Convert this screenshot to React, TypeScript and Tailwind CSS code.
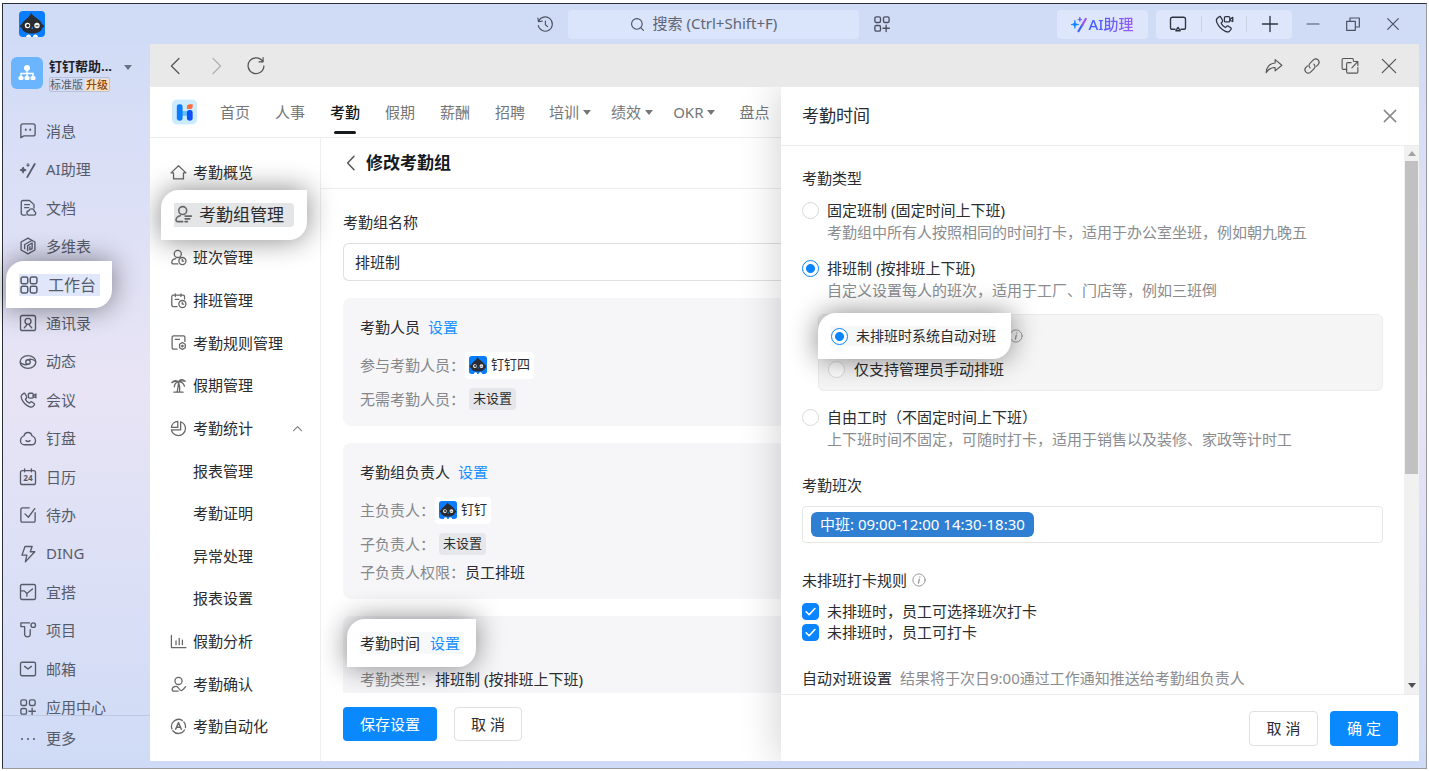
import { useState, type ReactNode } from "react";

const CALLOUT =
  "absolute z-10 flex items-center rounded-tl-[18px] rounded-br-[18px] bg-white shadow-[0_0_28px_rgba(0,0,0,0.48)]";

function Icon({
  size = 18,
  width = 1.8,
  className,
  children,
}: {
  size?: number;
  width?: number;
  className?: string;
  children: ReactNode;
}) {
  return (
    <svg
      width={size}
      height={size}
      viewBox="0 0 24 24"
      fill="none"
      stroke="currentColor"
      strokeWidth={width}
      strokeLinecap="round"
      strokeLinejoin="round"
      className={`shrink-0 ${className ?? ""}`}
      aria-hidden="true"
    >
      {children}
    </svg>
  );
}

const appsPlus = (
  <>
    <rect x="2.500" y="2.500" width="7.500" height="7.500" rx="2" />
    <rect x="14" y="2.500" width="7.500" height="7.500" rx="2" />
    <rect x="2.500" y="14" width="7.500" height="7.500" rx="2" />
    <path d="M17.500 13.500v8.500M13.300 17.700h8.500" />
  </>
);

const phoneVideo = (
  <>
    <path d="M6.200 3.200 3.600 5.400c-1 1-.9 3 0 5.200 2.200 5 5.500 8.300 10 10.200 2 .8 3.900.8 5-.2l1.800-2.100c.5-.7.4-1.400-.2-1.900l-3-2c-.7-.4-1.300-.3-1.900.2l-1.500 1.400c-2-.8-4.300-3-5.200-5.200L10 9.300c.5-.5.5-1.200.1-1.900l-2-3.700c-.5-.8-1.200-.9-1.900-.5z" />
    <rect x="12.500" y="3" width="6.500" height="6.500" rx="1.500" />
    <path d="m19 6.500 3.500-2.500v5l-3.500-1.500" />
  </>
);

const aiWand = (
  <>
    <path d="M11 21.500 21 4" strokeWidth="2.400" />
    <path d="M5.500 8.500c.3 2.500 1 3.200 3.500 3.500-2.500.3-3.200 1-3.500 3.500-.3-2.500-1-3.200-3.500-3.500 2.500-.3 3.200-1 3.500-3.500z" fill="currentColor" />
    <path d="M12 3.500c.2 1.500.6 1.900 2 2-1.400.2-1.800.6-2 2-.2-1.400-.6-1.800-2-2 1.400-.1 1.800-.5 2-2z" fill="currentColor" strokeWidth="1" />
  </>
);

const mainNav: { label: string; icon: ReactNode }[] = [
  {
    label: "消息",
    icon: (
      <>
        <path d="M2.500 21V5A2.500 2.500 0 0 1 5 2.500h14A2.500 2.500 0 0 1 21.500 5v11a2.500 2.500 0 0 1-2.500 2.500H6.500z" />
        <path d="M9 10v.5M15 10v.5" strokeWidth="2.500" />
      </>
    ),
  },
  { label: "AI助理", icon: aiWand },
  {
    label: "文档",
    icon: (
      <>
        <path d="M9 21.500H5.500A2.500 2.500 0 0 1 3 19V4.500A2.500 2.500 0 0 1 5.500 2H14l6 5.500V12" />
        <path d="M7.500 7.500H14M7.500 11.500H13" />
        <path d="M13.500 21.500a2.900 2.900 0 0 1-.2-5.800 3.700 3.700 0 0 1 7.200.9 2.500 2.500 0 0 1-.4 4.900z" />
      </>
    ),
  },
  {
    label: "多维表",
    icon: (
      <>
        <path d="m12 1.500 9.200 5.200v10.600L12 22.500l-9.200-5.200V6.700z" />
        <path d="M7.500 15.500V10l9-5M11.500 18v-6.500L17.500 8v7.500L14.500 17v-4" />
      </>
    ),
  },
  {
    label: "工作台",
    icon: (
      <>
        <rect x="2.500" y="2.500" width="8" height="8" rx="2" />
        <rect x="13.500" y="2.500" width="8" height="8" rx="2" />
        <rect x="2.500" y="13.500" width="8" height="8" rx="2" />
        <rect x="13.500" y="13.500" width="8" height="8" rx="2" />
      </>
    ),
  },
  {
    label: "通讯录",
    icon: (
      <>
        <rect x="2" y="2" width="20" height="20" rx="2.500" />
        <circle cx="12" cy="9.800" r="4" />
        <path d="M7 18.500c1-1.500 2.500-2 3.500-4.500M17 18.500c-1-1.500-2.500-2-3.500-4.500" />
      </>
    ),
  },
  {
    label: "动态",
    icon: (
      <>
        <ellipse cx="12" cy="12" rx="10.500" ry="8.500" />
        <circle cx="12" cy="12" r="3" />
        <path d="M2 13c3 3 8 3 10 2M22 11c-3-3-8-3-10-2" />
      </>
    ),
  },
  { label: "会议", icon: phoneVideo },
  {
    label: "钉盘",
    icon: (
      <>
        <path d="M6.800 9a5.300 5.300 0 0 1 10.400 0c3 1.300 4.800 3.600 4.800 6.600 0 3.200-2.300 5.400-5.200 5.400H7.200C4.300 21 2 18.800 2 15.600 2 12.600 3.800 10.300 6.800 9z" />
        <path d="M9.300 15.500c1.600 1.300 3.800 1.300 5.400 0" />
      </>
    ),
  },
  {
    label: "日历",
    icon: (
      <>
        <rect x="2" y="3.500" width="20" height="18.500" rx="2.500" />
        <path d="M7.500 1.300V5M16.500 1.300V5" />
        <text
          x="12"
          y="17"
          textAnchor="middle"
          fontSize="11"
          fontWeight="700"
          fill="currentColor"
          stroke="none"
        >
          24
        </text>
      </>
    ),
  },
  {
    label: "待办",
    icon: (
      <>
        <path d="M13.500 2.500H4.500a2 2 0 0 0-2 2v15a2 2 0 0 0 2 2h15a2 2 0 0 0 2-2V9" />
        <path d="m8 10.500 4.500 4.500L21 3.500" />
      </>
    ),
  },
  {
    label: "DING",
    icon: <path d="M8 2h9.500L15 9h6L8.500 22.500l2-9H4z" />,
  },
  {
    label: "宜搭",
    icon: (
      <>
        <rect x="2" y="2" width="20" height="20" rx="2" />
        <path d="M2.500 10.500h4.500l3.500 3.500L18 8M10.500 14v3.500" />
      </>
    ),
  },
  {
    label: "项目",
    icon: (
      <>
        <path d="M14 2.500H2.500v5h5V18a3.800 3.800 0 0 0 7.500 0v-6.500" />
        <circle cx="19" cy="5.500" r="3" />
      </>
    ),
  },
  {
    label: "邮箱",
    icon: (
      <>
        <rect x="2" y="3" width="20" height="18" rx="2" />
        <path d="m7.500 8.500 4.500 3.500 4.500-3.500" />
      </>
    ),
  },
  { label: "应用中心", icon: appsPlus },
];

const person = (
  <>
    <circle cx="11" cy="7" r="5" />
    <path d="M11 21H4.500a2 2 0 0 1-2-2c0-2.500 2.500-5 5.500-5.500" />
  </>
);

const sideMenu: { label: string; icon?: ReactNode; open?: boolean }[] = [
  {
    label: "考勤概览",
    icon: <path d="M12 2.500 1.500 12.500H5V21h14v-8.500h3.500z" />,
  },
  {
    label: "考勤组管理",
    icon: (
      <>
        {person}
        <path d="M14 14h8M14 17.500h6M14 21h3" />
      </>
    ),
  },
  {
    label: "班次管理",
    icon: (
      <>
        {person}
        <circle cx="17.500" cy="17" r="5" />
        <path d="M17.300 14.800V17h2" />
      </>
    ),
  },
  {
    label: "排班管理",
    icon: (
      <>
        <path d="M10 20.500H4.500a2 2 0 0 1-2-2V6.500a2 2 0 0 1 2-2h14a2 2 0 0 1 2 2V10M7.500 2.500v4M15.500 2.500v4M7.500 10.500h5" />
        <circle cx="17.500" cy="17" r="5" />
        <path d="M17.300 14.800V17h2" />
      </>
    ),
  },
  {
    label: "考勤规则管理",
    icon: (
      <>
        <path d="M10 21.500H5a2 2 0 0 1-2-2v-15a2 2 0 0 1 2-2h14a2 2 0 0 1 2 2v6M7.500 7.500h6" />
        <path d="m17.500 12 4 2.500v5l-4 2.500-4-2.500v-5z" />
        <circle cx="17.500" cy="17" r="1" />
      </>
    ),
  },
  {
    label: "假期管理",
    icon: (
      <>
        <path d="M5.500 21.500h13M13.500 21.500c.5-5 .3-10-1.500-14.500M10 21.500c1-4.500 2-9 2-14.500" />
        <path d="M12 7C9.500 4 5 4.500 2.500 8c3.500-2 7-2 9.500-1zM12 7c-3 .5-5.500 3-6 7M12 7c1.500-4 6-4.500 9.500-1-3.500-.8-7-.5-9.500 1zM12 7c4-.5 7 1.500 8.500 6" />
      </>
    ),
  },
  {
    label: "考勤统计",
    open: true,
    icon: (
      <>
        <path d="M15 2.500A10 10 0 1 1 2 14h13z" />
        <path d="M11 2A9.500 9.500 0 0 0 2 10.500h9z" />
      </>
    ),
  },
  { label: "报表管理" },
  { label: "考勤证明" },
  { label: "异常处理" },
  { label: "报表设置" },
  {
    label: "假勤分析",
    icon: <path d="M2 3.500v17h20.500M8.500 11v5.500M13 7.500v9M17.500 10v6.500" />,
  },
  {
    label: "考勤确认",
    icon: (
      <>
        <circle cx="12" cy="7" r="5" />
        <path d="M11.500 21.500H5a2 2 0 0 1-2-2c0-2.800 2.500-5 6-5 3 0 3.500 6 7 6 2 0 4-3 6-5.500" />
      </>
    ),
  },
  {
    label: "考勤自动化",
    icon: (
      <>
        <path d="M20.500 17A10 10 0 0 1 4 18M2.800 15.500A10 10 0 0 1 17.500 3.500M19.500 5.500a10 10 0 0 1 2.300 8" />
        <path d="m8 16 4-9.500 4 9.500M9.500 13h5" strokeWidth="2" />
      </>
    ),
  },
];

function Avatar({ size }: { size: number }) {
  return (
    <svg width={size} height={size} viewBox="0 0 26 26" className="shrink-0" aria-hidden="true">
      <rect width="26" height="26" rx="4" fill="#0a7dff" />
      <path d="M12 1.500C13 6 23.500 8 23.500 15.500c0 4.500-4.500 7-10.500 7s-10.500-2.500-10.500-7C2.500 9 11.500 7 12 1.500z" fill="#2b2c31" />
      <circle cx="2.500" cy="15" r="1.500" fill="#2b2c31" />
      <circle cx="23.500" cy="15" r="1.500" fill="#2b2c31" />
      <circle cx="8.500" cy="14.500" r="2.700" fill="#fff" />
      <circle cx="18" cy="14.500" r="2.700" fill="#fff" />
      <circle cx="8.800" cy="14.500" r="1.500" fill="#222" />
      <path d="M16.500 14.800h3" stroke="#222" strokeWidth="1" />
      <path d="m13.300 16 1.200 1.800h-2.400z" fill="#1ba0ff" />
      <path d="M7 26c0-3.500 5-3.500 5 0M14 26c0-3.500 5-3.500 5 0" fill="#fff" />
    </svg>
  );
}

function Caret({ className }: { className?: string }) {
  return (
    <svg width="8" height="5" viewBox="0 0 8 5" className={className} aria-hidden="true">
      <path d="M0 0h8L4 5z" fill="currentColor" />
    </svg>
  );
}

function InfoIcon() {
  return (
    <Icon size={14} width={1.5} className="text-[#8c8c8c]">
      <circle cx="12" cy="12" r="10.500" />
      <path d="m12.500 10.500-1.500 7M13.500 6.500v.5" strokeWidth="2" />
    </Icon>
  );
}

function TitleBar() {
  return (
    <header className="flex h-10 shrink-0 items-center text-[#4b5160]">
      <div className="flex flex-1 pl-4 pr-1.5">
        <Avatar size={26} />
      </div>
      <div className="flex items-center gap-[14px]">
        <button type="button" aria-label="历史记录">
          <Icon width={1.5}>
            <path d="M3.500 8.500A9.500 9.500 0 1 1 3 14M2.500 4l.8 5 5-.8M12.500 8v5l3 2.500" />
          </Icon>
        </button>
        <label className="flex h-[29px] w-[291px] items-center justify-center gap-2 rounded bg-[#dae4fa]">
          <Icon size={15}>
            <circle cx="11" cy="11" r="8.500" />
            <path d="m17.500 17.500 4 4" />
          </Icon>
          <input
            aria-label="搜索"
            placeholder="搜索 (Ctrl+Shift+F)"
            className="h-6 w-[144px] bg-transparent pb-0.5 text-[15px] outline-none placeholder:text-[#5e6575]"
          />
        </label>
        <button type="button" aria-label="应用">
          <Icon>{appsPlus}</Icon>
        </button>
      </div>
      <div className="flex flex-1 items-center justify-end pr-[25px]">
        <button
          type="button"
          className="mr-2 flex h-[29px] w-[91px] items-center justify-center rounded bg-[#dde6fb]"
        >
          <svg width="17" height="17" viewBox="0 0 24 24" fill="none" strokeLinecap="round" aria-hidden="true">
            <path d="M10.500 21.500 16 12.500" stroke="#3d62f8" strokeWidth="3" />
            <path d="M16 12.500 21 4" stroke="#9a55f2" strokeWidth="3" />
            <path d="M5.500 6.500c.4 4.200 1.300 5.100 5.500 5.500-4.200.4-5.100 1.300-5.500 5.500C5.100 13.300 4.200 12.400 0 12c4.200-.4 5.100-1.300 5.500-5.500z" fill="#0a84ff" stroke="#0a84ff" />
            <path d="M12.500 2c.3 2.200.9 2.800 3 3-2.100.3-2.700.9-3 3-.3-2.100-.9-2.700-3-3 2.100-.2 2.700-.8 3-3z" fill="#6a5df5" stroke="#6a5df5" />
          </svg>
          <span className="bg-gradient-to-r from-[#2f5bff] to-[#9a5bf5] bg-clip-text text-[15px] font-medium leading-5 text-transparent">
            AI助理
          </span>
        </button>
        <div className="mr-[13px] flex h-[29px] w-[136px] items-center rounded bg-[#dde6fb] text-[#2f3440]">
          <button type="button" aria-label="投屏" className="flex flex-1 justify-center">
            <Icon>
              <path d="M8 19H4.500A2.500 2.500 0 0 1 2 16.500v-11A2.500 2.500 0 0 1 4.500 3h15A2.500 2.500 0 0 1 22 5.500v11a2.500 2.500 0 0 1-2.500 2.500H16" />
              <path d="m12 16.500 3 4.500H9z" />
            </Icon>
          </button>
          <span className="h-4 w-px bg-[#ccd3e6]" />
          <button type="button" aria-label="通话" className="flex flex-1 justify-center">
            <Icon size={20} width={1.5}>{phoneVideo}</Icon>
          </button>
          <span className="h-4 w-px bg-[#ccd3e6]" />
          <button type="button" aria-label="新建" className="flex flex-1 justify-center">
            <Icon>
              <path d="M12 2v20M2 12h20" />
            </Icon>
          </button>
        </div>
        <div className="flex items-center gap-6">
          <button type="button" aria-label="最小化">
            <Icon size={16}>
              <path d="M3 12h18" />
            </Icon>
          </button>
          <button type="button" aria-label="还原">
            <Icon size={16}>
              <path d="M2.500 8h13v13.500h-13zM7.500 8V3h14v13.500h-6" />
            </Icon>
          </button>
          <button type="button" aria-label="关闭窗口">
            <Icon size={16}>
              <path d="m4 4 16 16M20 4 4 20" />
            </Icon>
          </button>
        </div>
      </div>
    </header>
  );
}

function AppSidebar() {
  return (
    <aside className="flex w-[147px] shrink-0 flex-col text-[15px] text-[#565b69]">
      <div className="flex h-[68px] shrink-0 gap-1.5 pl-2 pt-[13px]">
        <span className="flex size-8 items-center justify-center rounded-md bg-[#6bb5ff]">
          <svg width="18" height="18" viewBox="0 0 18 18" fill="#fff" aria-hidden="true">
            <circle cx="9" cy="4" r="3" />
            <rect x="0.500" y="12" width="5" height="4" rx="1.500" />
            <rect x="6.500" y="12" width="5" height="4" rx="1.500" />
            <rect x="12.500" y="12" width="5" height="4" rx="1.500" />
            <path d="M3 12V9.500h12V12M9 6v6" stroke="#fff" strokeWidth="1.500" fill="none" />
          </svg>
        </span>
        <div>
          <button type="button" className="flex h-5 items-center gap-3 text-[13px] font-bold text-[#1d2129]">
            钉钉帮助...
            <Caret className="text-[#6c7383]" />
          </button>
          <p className="flex h-[15px] w-fit items-center rounded-xs border border-[#b9c1d6] text-[11px] leading-3 text-[#555b69]">
            标准版
            <span className="ml-0.5 bg-[#fce0c4] px-px font-medium text-[#8a4a10]">升级</span>
          </p>
        </div>
      </div>
      <ul className="flex min-h-0 flex-1 flex-col">
        {mainNav.map((item) => {
          const last = item.label === "应用中心";
          if (item.label === "工作台") {
            return (
              <li key={item.label} className="relative flex flex-1 items-center">
                <button type="button" className={`${CALLOUT} left-[3px] h-[47px] w-[106px] pl-[13px] text-base`}>
                  <span className="flex h-[22px] items-center gap-[9px] bg-[#e1e7fb] pr-1">
                    <Icon size={20}>{item.icon}</Icon>
                    {item.label}
                  </span>
                </button>
              </li>
            );
          }
          return (
            <li key={item.label} className={last ? "h-[27px] shrink-0" : "flex flex-1"}>
              <button
                type="button"
                className={`flex items-center gap-[9px] pl-4 ${last ? "h-[38px]" : ""}`}
              >
                <Icon>{item.icon}</Icon>
                {item.label}
              </button>
            </li>
          );
        })}
      </ul>
      <button type="button" className="flex h-[46px] shrink-0 items-center gap-[9px] border-t border-[#bcc8e2] pl-4">
        <Icon>
          <path d="M4 12h.01M12 12h.01M20 12h.01" strokeWidth="2.800" />
        </Icon>
        更多
      </button>
    </aside>
  );
}

function PageToolbar() {
  return (
    <div className="flex h-[43px] shrink-0 items-center justify-between bg-[#e9e9e9] pl-4 pr-5 text-[#555]">
      <div className="flex items-center gap-5">
        <button type="button" aria-label="后退">
          <Icon size={20} width={1.5}>
            <path d="m15.500 3-9 9 9 9" />
          </Icon>
        </button>
        <button type="button" aria-label="前进" className="text-[#b0b0b0]">
          <Icon size={20} width={1.5}>
            <path d="m8.500 3 9 9-9 9" />
          </Icon>
        </button>
        <button type="button" aria-label="刷新">
          <Icon size={20} width={1.5}>
            <path d="M20 6.500A9.500 9.500 0 1 0 21.500 12M20.500 2v5h-5" />
          </Icon>
        </button>
      </div>
      <div className="flex items-center gap-5">
        <button type="button" aria-label="分享">
          <Icon width={1.5}>
            <path d="M13.500 3.500 22.500 11l-9 7.500V14C8 14 4.500 16 1.500 21c0-7 4.500-12.500 12-13z" />
          </Icon>
        </button>
        <button type="button" aria-label="复制链接">
          <Icon width={1.5}>
            <path d="M9.500 14.500a4.500 4.500 0 0 1 0-6.300l4.700-4.700a4.500 4.500 0 0 1 6.300 6.300L18 12.300" />
            <path d="M14.500 9.500a4.500 4.500 0 0 1 0 6.300l-4.700 4.700a4.500 4.500 0 0 1-6.300-6.300L6 11.700" />
          </Icon>
        </button>
        <button type="button" aria-label="新窗口打开">
          <Icon width={1.5}>
            <path d="M7.500 16.500H3A1.500 1.500 0 0 1 1.500 15V3.500A1.500 1.500 0 0 1 3 2h12a1.500 1.500 0 0 1 1.500 1.500V5" />
            <path d="M13.500 7.500H9A1.500 1.500 0 0 0 7.500 9v11A1.500 1.500 0 0 0 9 21.500h12a1.500 1.500 0 0 0 1.500-1.500v-6M14.500 14.500l7.500-8M17 6h5.500v5.500" />
          </Icon>
        </button>
        <button type="button" aria-label="关闭页面">
          <Icon size={20} width={1.5}>
            <path d="m4 4 16 16M20 4 4 20" />
          </Icon>
        </button>
      </div>
    </div>
  );
}

function TopTabs() {
  return (
    <nav className="flex h-[51px] shrink-0 items-center whitespace-nowrap border-b border-[#ececec] pl-[22px] text-[15px] leading-5 text-[#747677]">
      <svg width="25" height="26" viewBox="0 0 26 26" className="mr-[23px] shrink-0" aria-hidden="true">
        <rect width="26" height="26" rx="5" fill="#cdebff" />
        <path d="M8 12h10v5H8z" fill="#62c4ff" />
        <rect x="5" y="5" width="6" height="17" rx="2.500" fill="#0b7cff" />
        <rect x="15.500" y="11" width="6" height="11" rx="2.500" fill="#0b52f5" />
        <path d="M15.500 10V8a3 3 0 0 1 3-3h3v2a3 3 0 0 1-3 3z" fill="#ff6d3f" />
      </svg>
      <div className="flex h-full items-center gap-6">
        <div className="flex h-full items-center gap-[25px]">
          {["首页", "人事", "考勤", "假期", "薪酬", "招聘"].map((tab) => (
            <a
              key={tab}
              href="#"
              className={
                tab === "考勤"
                  ? "relative flex h-full items-center font-medium text-[#171a1d] after:absolute after:bottom-[3px] after:left-1 after:h-[3px] after:w-[22px] after:rounded-full after:bg-[#171a1d]"
                  : ""
              }
            >
              {tab}
            </a>
          ))}
        </div>
        <div className="flex items-center gap-5">
          {["培训", "绩效", "OKR"].map((tab) => (
            <button key={tab} type="button" className="flex items-center gap-1">
              {tab}
              <Caret />
            </button>
          ))}
        </div>
        <a href="#">盘点</a>
      </div>
    </nav>
  );
}

function SideMenu() {
  return (
    <ul className="flex w-[171px] shrink-0 flex-col border-r border-[#efefef] py-[13px] text-[15px] text-[#2a2c2f]">
      {sideMenu.map((item) => {
        if (item.label === "考勤组管理") {
          return (
            <li key={item.label} className="relative z-10 flex flex-1 items-center">
              <a href="#" className={`${CALLOUT} left-[11px] h-[50px] w-[146px] pl-[13px] text-[17px]`}>
                <span className="flex h-6 w-[120px] items-center gap-1.5 rounded-r bg-[#e3e5e7]">
                  <Icon size={19} width={2} className="text-[#666]">{item.icon}</Icon>
                  {item.label}
                </span>
              </a>
            </li>
          );
        }
        return (
          <li key={item.label} className="flex flex-1 items-center">
            <a href="#" className="flex flex-1 items-center gap-1.5 pl-5">
              {item.icon ? (
                <Icon size={17} className="text-[#666]">{item.icon}</Icon>
              ) : (
                <span className="w-[17px]" />
              )}
              {item.label}
            </a>
            {item.open && (
              <Icon size={11} width={2.2} className="mr-[17px] text-[#777]">
                <path d="m3 17 9-9 9 9" />
              </Icon>
            )}
          </li>
        );
      })}
    </ul>
  );
}

function MemberChip({ name }: { name: string }) {
  return (
    <span className="flex h-[27px] items-center gap-1 rounded bg-white px-1 text-[13px] text-[#2a2c2f]">
      <Avatar size={18} />
      {name}
    </span>
  );
}

function UnsetChip() {
  return (
    <span className="ml-1 flex h-[22px] items-center rounded bg-[#e5e7ea] px-1 text-[13px] text-[#2a2c2f]">未设置</span>
  );
}

function GroupCard({ title, children }: { title: string; children: ReactNode }) {
  return (
    <section className="mt-[17px] rounded-l-lg bg-[#f6f6f9] pb-4 pl-[17px] pt-[18px] text-[#85878a]">
      <h3 className="flex gap-2 leading-[22px] text-[#2a2c2f]">
        {title}
        <a href="#" className="text-[#1890ff]">设置</a>
      </h3>
      {children}
    </section>
  );
}

function GroupForm() {
  const [name, setName] = useState("排班制");

  return (
    <main className="flex min-w-0 flex-1 flex-col whitespace-nowrap text-[15px]">
      <div className="flex h-[51px] shrink-0 items-center gap-1.5 border-b border-[#ececec] pl-[21px]">
        <button type="button" aria-label="返回">
          <Icon width={2} className="text-[#555]">
            <path d="m16 3-8.500 9 8.500 9" />
          </Icon>
        </button>
        <h2 className="text-[17px] font-bold text-[#171a1d]">修改考勤组</h2>
      </div>
      <div className="min-h-0 flex-1 overflow-hidden pl-[22px] pt-[23px] text-[#2a2c2f]">
        <label htmlFor="group-name" className="block leading-5">考勤组名称</label>
        <input
          id="group-name"
          value={name}
          onChange={(event) => setName(event.target.value)}
          className="mt-[11px] h-[38px] w-full rounded-l-md border border-r-0 border-[#dfe0e1] px-[11px] pb-0.5 outline-none"
        />
        <GroupCard title="考勤人员">
          <div className="mt-[13px] flex h-7 items-center">
            参与考勤人员：
            <MemberChip name="钉钉四" />
          </div>
          <div className="mt-[9px] flex h-[22px] items-center">
            无需考勤人员：
            <UnsetChip />
          </div>
        </GroupCard>
        <GroupCard title="考勤组负责人">
          <div className="mt-[13px] flex h-7 items-center">
            主负责人：
            <MemberChip name="钉钉" />
          </div>
          <div className="mt-[9px] flex h-[22px] items-center">
            子负责人：
            <UnsetChip />
          </div>
          <div className="mt-1.5 flex h-[22px] items-center">
            子负责人权限：
            <span className="text-[#2a2c2f]">员工排班</span>
          </div>
        </GroupCard>
        <section className="mt-[17px] rounded-l-lg bg-[#f6f6f9] pl-[17px] pt-[18px] text-[#85878a]">
          <div className="relative h-[22px] text-[#2a2c2f]">
            <h3 className={`${CALLOUT} -left-[13px] -top-[15px] h-12 w-[129px] pl-[13px]`}>
              <span className="flex h-[22px] w-[103px] items-center gap-2.5 bg-[#f7f8fa]">
                考勤时间
                <a href="#" className="text-[#1890ff]">设置</a>
              </span>
            </h3>
          </div>
          <div className="mt-3 flex h-[22px] items-center">
            考勤类型：
            <span className="text-[#2a2c2f]">排班制 (按排班上下班)</span>
          </div>
          <div className="h-4" />
        </section>
      </div>
      <div className="flex h-[68px] shrink-0 gap-[17px] pl-[22px] pt-[14px]">
        <button type="button" className="h-[34px] w-[94px] rounded bg-[#0a89ff] text-white">保存设置</button>
        <button type="button" className="h-[34px] w-[68px] rounded border border-[#dfe0e1] bg-white text-[#2a2c2f]">
          取 消
        </button>
      </div>
    </main>
  );
}

const radioCls =
  "size-[17px] shrink-0 appearance-none rounded-full border border-[#d9d9d9] bg-white checked:border-[#0a84ff] checked:bg-[radial-gradient(circle,#0a84ff_4px,#fff_5px)]";

function TypeOption({
  value,
  title,
  desc,
  type,
  onSelect,
}: {
  value: string;
  title: string;
  desc: string;
  type: string;
  onSelect: (value: string) => void;
}) {
  return (
    <label className="flex gap-2 leading-[22px]">
      <span className="flex h-[22px] items-center">
        <input
          type="radio"
          name="type"
          checked={type === value}
          onChange={() => onSelect(value)}
          className={radioCls}
        />
      </span>
      <span className="flex flex-col">
        <span>{title}</span>
        <span className="text-[#8a8c8f]">{desc}</span>
      </span>
    </label>
  );
}

function CheckOption({ label }: { label: string }) {
  return (
    <label className="flex h-[21px] items-center gap-2">
      <span className="grid place-items-center">
        <input
          type="checkbox"
          defaultChecked
          className="peer col-start-1 row-start-1 size-[17px] appearance-none rounded border border-[#d9d9d9] checked:border-[#0a84ff] checked:bg-[#0a84ff]"
        />
        <Icon size={13} width={3} className="pointer-events-none col-start-1 row-start-1 text-white opacity-0 peer-checked:opacity-100">
          <path d="m4 12.500 5.500 5.500L20 6.500" />
        </Icon>
      </span>
      {label}
    </label>
  );
}

function TimeDrawer() {
  const [type, setType] = useState("shift");
  const [mode, setMode] = useState("auto");

  return (
    <aside className="relative z-20 flex w-[638px] shrink-0 flex-col bg-white text-[15px] text-[#2a2c2f] shadow-[-4px_0_36px_rgba(0,0,0,0.17)]">
      <div className="flex h-[59px] shrink-0 items-center justify-between border-b border-[#ececec] pl-[21px] pr-5">
        <h2 className="text-[17px]">考勤时间</h2>
        <button type="button" aria-label="关闭" className="text-[#888]">
          <Icon width={2}>
            <path d="m4.500 4.500 15 15M19.500 4.500l-15 15" />
          </Icon>
        </button>
      </div>
      <div className="flex min-h-0 flex-1">
        <div className="min-w-0 flex-1 overflow-hidden px-[21px] pt-[21px]">
          <h3 className="leading-[22px]">考勤类型</h3>
          <div className="mt-2.5">
            <TypeOption
              value="fixed"
              title="固定班制 (固定时间上下班)"
              desc="考勤组中所有人按照相同的时间打卡，适用于办公室坐班，例如朝九晚五"
              type={type}
              onSelect={setType}
            />
          </div>
          <div className="mt-[14px]">
            <TypeOption
              value="shift"
              title="排班制 (按排班上下班)"
              desc="自定义设置每人的班次，适用于工厂、门店等，例如三班倒"
              type={type}
              onSelect={setType}
            />
          </div>
          <div className="ml-4 mt-[13px] rounded-md border border-[#ebebeb] bg-[#f5f5f5] py-2.5 pl-[9px]">
            <div className="relative flex h-[22px] items-center pl-[181px]">
              <label className={`${CALLOUT} -left-[10px] h-[46px] w-[193px] pl-[13px] text-sm`}>
                <span className="flex h-5 items-center gap-2 bg-[#f6f7f8]">
                  <input
                    type="radio"
                    name="mode"
                    checked={mode === "auto"}
                    onChange={() => setMode("auto")}
                    className={radioCls}
                  />
                  未排班时系统自动对班
                </span>
              </label>
              <InfoIcon />
            </div>
            <label className="mt-[11px] flex h-[22px] items-center gap-[9px]">
              <input
                type="radio"
                name="mode"
                checked={mode === "manual"}
                onChange={() => setMode("manual")}
                className={radioCls}
              />
              仅支持管理员手动排班
            </label>
          </div>
          <div className="mt-[15px]">
            <TypeOption
              value="free"
              title="自由工时（不固定时间上下班）"
              desc="上下班时间不固定，可随时打卡，适用于销售以及装修、家政等计时工"
              type={type}
              onSelect={setType}
            />
          </div>
          <h3 className="mt-6 leading-[22px]">考勤班次</h3>
          <div className="mt-2.5 flex h-[37px] items-center rounded border border-[#e6e6e6] pl-2">
            <span className="flex h-[25px] items-center rounded-md bg-[#2f7fd3] px-[9px] text-white">
              中班: 09:00-12:00 14:30-18:30
            </span>
          </div>
          <h3 className="mt-[26px] flex items-center gap-[5px] leading-[22px]">
            未排班打卡规则
            <InfoIcon />
          </h3>
          <div className="mt-2.5">
            <CheckOption label="未排班时，员工可选择班次打卡" />
            <CheckOption label="未排班时，员工可打卡" />
          </div>
          <h3 className="mt-6 flex gap-2 leading-[22px]">
            自动对班设置
            <span className="text-[#8a8c8f]">结果将于次日9:00通过工作通知推送给考勤组负责人</span>
          </h3>
        </div>
        <div className="flex w-[15px] shrink-0 flex-col items-center bg-[#f1f1f1]" aria-hidden="true">
          <div className="flex h-[15px] items-center">
            <Caret className="rotate-180 text-[#a3a3a3]" />
          </div>
          <div className="h-[313px] w-[13px] bg-[#c1c1c1]" />
          <div className="mt-auto flex h-[17px] items-center">
            <Caret className="text-[#505050]" />
          </div>
        </div>
      </div>
      <div className="flex h-[67px] shrink-0 justify-end gap-3 border-t border-[#ececec] pr-[21px] pt-4">
        <button type="button" className="h-[35px] w-[69px] rounded border border-[#dfe0e1]">取 消</button>
        <button type="button" className="h-[35px] w-[68px] rounded bg-[#0a89ff] text-white">确 定</button>
      </div>
    </aside>
  );
}

export default function App() {
  return (
    <div
      lang="zh-CN"
      className="h-screen bg-white pb-0.5 pl-0.5 pr-0.5 pt-[3px] font-['Noto_Sans','Noto_Sans_CJK_SC',sans-serif]"
    >
      <div className="flex h-full flex-col border border-b-[#9a9a9a] border-l-[#2b2f38] border-r-[#9a9a9a] border-t-[#2b2f38] bg-gradient-to-b from-[#cfdbf6] via-[#e8e4f5] to-[#cfdbf6]">
        <div className="bg-[#d0dcf6]">
          <TitleBar />
        </div>
        <div className="flex min-h-0 flex-1 pb-[7px] pr-[7px]">
          <AppSidebar />
          <div className="relative z-20 flex min-w-0 flex-1 flex-col">
            <PageToolbar />
            <div className="flex min-h-0 flex-1 overflow-hidden bg-white">
              <div className="flex min-w-0 flex-1 flex-col overflow-hidden">
                <TopTabs />
                <div className="flex min-h-0 flex-1">
                  <SideMenu />
                  <GroupForm />
                </div>
              </div>
              <TimeDrawer />
            </div>
          </div>
        </div>
      </div>
    </div>
  );
}
